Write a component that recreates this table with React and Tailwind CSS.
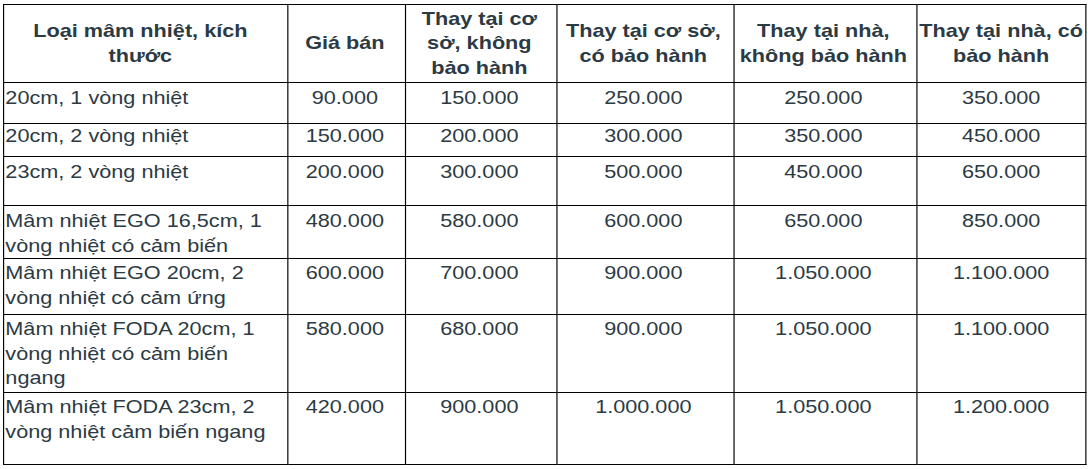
import React from "react";

const headers = [
  "Loại mâm nhiệt, kích thước",
  "Giá bán",
  "Thay tại cơ sở, không bảo hành",
  "Thay tại cơ sở, có bảo hành",
  "Thay tại nhà, không bảo hành",
  "Thay tại nhà, có bảo hành",
];

const rows = [
  { h: "h-[41px]", pt: "pt-[3px]", cells: ["20cm, 1 vòng nhiệt", "90.000", "150.000", "250.000", "250.000", "350.000"] },
  { h: "h-[33px]", pt: "pt-[0px]", cells: ["20cm, 2 vòng nhiệt", "150.000", "200.000", "300.000", "350.000", "450.000"] },
  { h: "h-[49px]", pt: "pt-[3px]", cells: ["23cm, 2 vòng nhiệt", "200.000", "300.000", "500.000", "450.000", "650.000"] },
  { h: "h-[53px]", pt: "pt-[3px]", cells: ["Mâm nhiệt EGO 16,5cm, 1 vòng nhiệt có cảm biến", "480.000", "580.000", "600.000", "650.000", "850.000"] },
  { h: "h-[56px]", pt: "pt-[2px]", cells: ["Mâm nhiệt EGO 20cm, 2 vòng nhiệt có cảm ứng", "600.000", "700.000", "900.000", "1.050.000", "1.100.000"] },
  { h: "h-[78px]", pt: "pt-[2px]", cells: ["Mâm nhiệt FODA 20cm, 1 vòng nhiệt có cảm biến ngang", "580.000", "680.000", "900.000", "1.050.000", "1.100.000"] },
  { h: "h-[72px]", pt: "pt-[2px]", cells: ["Mâm nhiệt FODA 23cm, 2 vòng nhiệt cảm biến ngang", "420.000", "900.000", "1.000.000", "1.050.000", "1.200.000"] },
];

const padFor = (i) => (i === 0 ? "pl-[1px] pr-[10px]" : i === 5 ? "pl-0 pr-0" : "pl-[1px] pr-[4px]");

export default function App() {
  return (
    <div className="w-[1088px] h-[469px] bg-white overflow-hidden pt-[4px] pl-[3px]">
      <table
        className="table-fixed border-collapse w-[929px] text-[18.6px] text-[#2c3a44] scale-x-[1.165] origin-top-left"
        style={{ fontFamily: '"Liberation Sans", Arial, sans-serif' }}
      >
        <colgroup>
          <col className="w-[243.8px]" />
          <col className="w-[101.3px]" />
          <col className="w-[129.6px]" />
          <col className="w-[151.9px]" />
          <col className="w-[157.1px]" />
          <col className="w-[145.2px]" />
        </colgroup>
        <thead>
          <tr className="h-[78px]">
            {headers.map((t, i) => (
              <th
                key={i}
                className={`border border-black font-bold text-center align-middle leading-[24.5px] py-0 ${padFor(i)}`}
              >
                {t}
              </th>
            ))}
          </tr>
        </thead>
        <tbody>
          {rows.map((r, ri) => (
            <tr key={ri} className={r.h}>
              {r.cells.map((c, ci) => (
                <td
                  key={ci}
                  className={`border border-black align-top leading-[24.5px] pb-0 ${r.pt} ${padFor(ci)} ${
                    ci === 0 ? "text-left" : "text-center"
                  }`}
                >
                  {c}
                </td>
              ))}
            </tr>
          ))}
        </tbody>
      </table>
    </div>
  );
}
